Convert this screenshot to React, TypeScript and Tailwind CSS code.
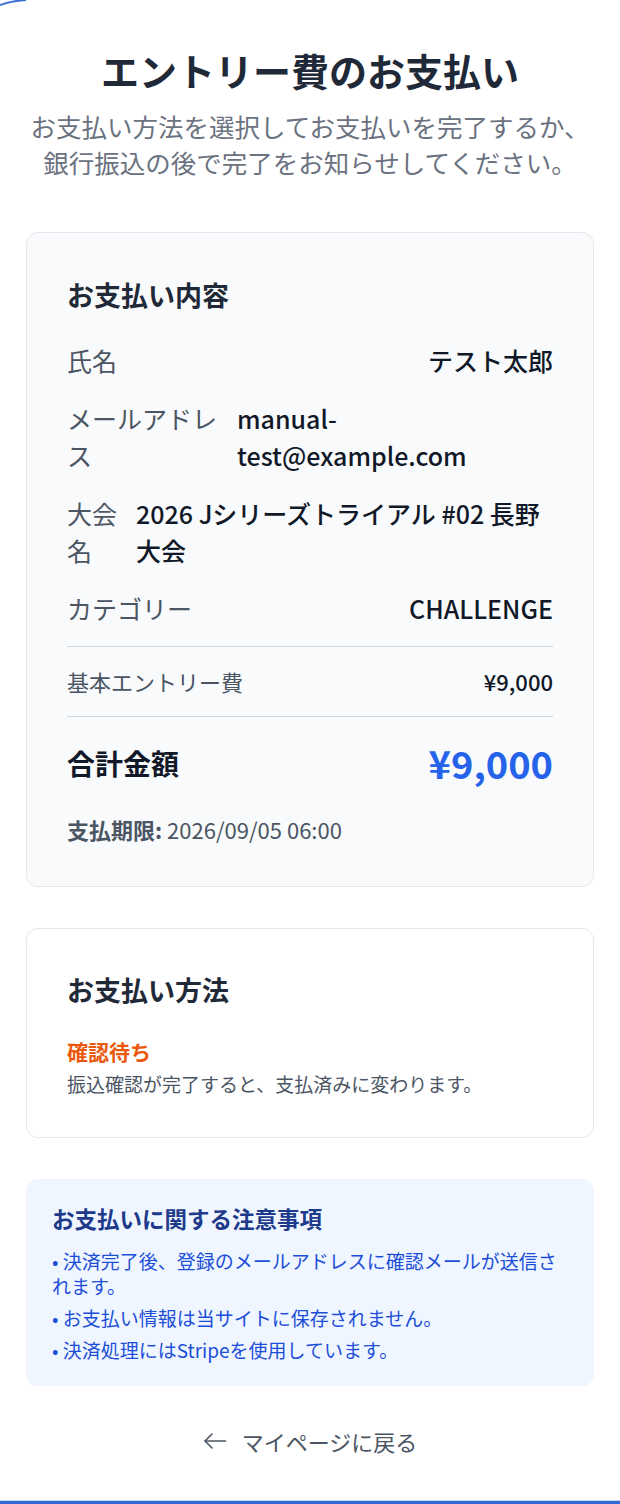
const Row = ({ label, value, labelWidth = "" }: { label: string; value: string; labelWidth?: string }) => {
  return (
    <div className="flex items-start justify-between gap-[18px] text-[25px] leading-[37px]">
      <span className={`text-[#4b5563] ${labelWidth}`}>{label}</span>
      <span className="min-w-0 font-medium text-[#111827]">{value}</span>
    </div>
  );
};

const notes = [
  "決済完了後、登録のメールアドレスに確認メールが送信されます。",
  "お支払い情報は当サイトに保存されません。",
  "決済処理にはStripeを使用しています。",
];

export default function App() {
  return (
    <div className="relative flex min-h-[1504px] flex-col bg-white font-['Noto_Sans_CJK_JP','Noto_Sans',sans-serif] text-[#1f2937]">
      <svg className="absolute left-0 top-0" width="30" height="8" viewBox="0 0 30 8">
        <path d="M0 5 Q10 1 26 0" stroke="#3b6fd8" strokeWidth="2" fill="none" />
      </svg>
      <main className="flex flex-1 flex-col px-[26px] pt-[46px]">
        <h1 className="text-center text-[38px] font-bold leading-[48px] text-[#1f2937]">エントリー費のお支払い</h1>
        <p className="mt-[14px] text-center text-[25.5px] leading-[36px] text-[#6b7280]">
          お支払い方法を選択してお支払いを完了するか、
          <br />
          銀行振込の後で完了をお知らせしてください。
        </p>

        <section className="mt-[52px] rounded-xl border border-[#e5e7eb] bg-[#f9fafb] px-[40px] pb-[41px] pt-[42px]">
          <h2 className="text-[27px] font-bold leading-[40px] text-[#1f2937]">お支払い内容</h2>
          <div className="mt-[27px] flex flex-col gap-[21px]">
            <Row label="氏名" value="テスト太郎" />
            <Row label="メールアドレス" value="manual-test@example.com" labelWidth="w-[152px] shrink-0" />
            <Row label="大会名" value="2026 Jシリーズトライアル #02 長野大会" labelWidth="w-[51px] shrink-0" />
            <Row label="カテゴリー" value="CHALLENGE" />
          </div>
          <div className="mt-[19px] flex items-center justify-between border-y border-[#d1d5db] py-[17px] text-[22px] leading-[35px]">
            <span className="text-[#4b5563]">基本エントリー費</span>
            <span className="font-medium text-[#111827]">¥9,000</span>
          </div>
          <div className="mt-[22px] flex items-center justify-between">
            <span className="text-[28px] font-bold leading-[40px] text-[#111827]">合計金額</span>
            <span className="text-[38px] font-bold leading-[48px] text-[#2563eb]">¥9,000</span>
          </div>
          <p className="mt-[26px] text-[22px] leading-[32px] text-[#4b5563]">
            <span className="font-bold">支払期限:</span> 2026/09/05 06:00
          </p>
        </section>

        <section className="mt-[41px] rounded-xl border border-[#e5e7eb] bg-white px-[40px] pb-[38px] pt-[41px]">
          <h2 className="text-[27px] font-bold leading-[40px] text-[#1f2937]">お支払い方法</h2>
          <p className="mt-[25px] text-[21px] font-bold leading-[32px] text-[#ea580c]">確認待ち</p>
          <p className="mt-[2px] text-[19px] leading-[30px] text-[#4b5563]">振込確認が完了すると、支払済みに変わります。</p>
        </section>

        <section className="mt-[41px] rounded-xl bg-[#eff6ff] px-[26px] pb-[24px] pt-[23px]">
          <h3 className="text-[22.5px] font-bold leading-[32px] text-[#1e3a8a]">お支払いに関する注意事項</h3>
          <ul className="mt-[14px] flex flex-col gap-[7px] text-[19px] leading-[25px] text-[#1d4ed8]">
            {notes.map((note) => (
              <li key={note}>• {note}</li>
            ))}
          </ul>
        </section>

        <a href="#" className="mt-[39px] flex items-center justify-center gap-[15px] text-[22px] leading-[32px] text-[#4b5563]">
          <svg width="24" height="24" viewBox="0 0 24 24" fill="none" stroke="currentColor" strokeWidth="1.6" strokeLinecap="round" strokeLinejoin="round">
            <path d="M22.5 12H2" />
            <path d="M9 5L2 12L9 19" />
          </svg>
          <span>マイページに戻る</span>
        </a>
      </main>
      <div className="mt-[30px] h-[4px] border-t border-[#c7d8f4] bg-[#2f6ad6]" />
    </div>
  );
}
